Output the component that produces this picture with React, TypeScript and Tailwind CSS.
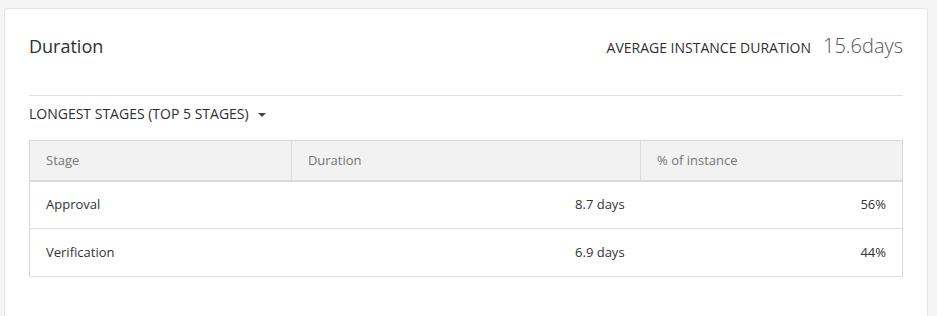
const rows = [
  { stage: 'Approval', duration: '8.7 days', pct: '56%' },
  { stage: 'Verification', duration: '6.9 days', pct: '44%' },
]

const App = () => {
  return (
    <div
      className="min-h-screen bg-[#f5f5f5] pt-2 pl-1 pr-[9px] text-[#333]"
      style={{ fontFamily: '"Open Sans", "Liberation Sans", sans-serif' }}
    >
      <div className="h-[320px] rounded-[4px] border border-[#e3e3e3] bg-white px-6 pt-6">
        {/* header */}
        <div className="flex items-baseline justify-between">
          <h2 className="text-[18px] font-medium leading-[26px] text-[#2f2f2f]">Duration</h2>
          <div className="flex items-baseline gap-3">
            <span className="text-[14px] uppercase text-[#2f2f2f]">
              Average instance duration
            </span>
            <span className="text-[20px] font-light leading-[26px] text-[#555]">
              15.6days
            </span>
          </div>
        </div>
        <div className="mt-[36px] h-px bg-[#e0e0e0]"></div>

        <button className="mt-2 flex items-center gap-[9px] text-[14px] uppercase leading-5 text-[#2f2f2f]">
          Longest stages (top 5 stages)
          <span className="mt-px h-0 w-0 border-x-[4px] border-t-[4px] border-x-transparent border-t-[#444]"></span>
        </button>

        <table className="mt-4 w-full table-fixed border-collapse border border-[#d6d6d6] text-[13px]">
          <colgroup>
            <col className="w-[30%]" />
            <col className="w-[40%]" />
            <col className="w-[30%]" />
          </colgroup>
          <thead>
            <tr className="h-[40px] border-b-2 border-[#d9d9d9] bg-[#f2f2f2] text-left text-[#777]">
              <th className="border-r border-[#dcdcdc] px-4 font-normal">Stage</th>
              <th className="border-r border-[#dcdcdc] px-4 font-normal">Duration</th>
              <th className="px-4 font-normal">% of instance</th>
            </tr>
          </thead>
          <tbody>
            {rows.map((r) => (
              <tr key={r.stage} className="h-[48px] border-b border-[#dedede] text-[#333]">
                <td className="px-4">{r.stage}</td>
                <td className="px-4 text-right">{r.duration}</td>
                <td className="px-4 text-right">{r.pct}</td>
              </tr>
            ))}
          </tbody>
        </table>
      </div>
    </div>
  )
}

export default App
